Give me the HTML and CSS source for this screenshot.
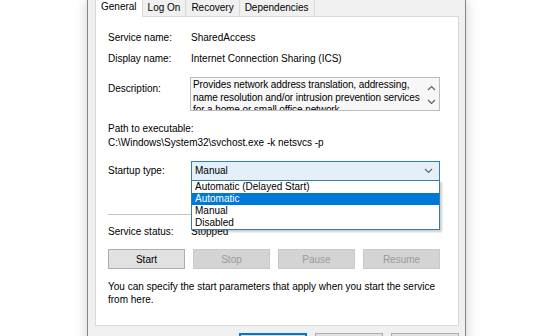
FILE: index.html
```html
<!DOCTYPE html>
<html lang="en">
<head>
    <meta charset="UTF-8">
    <meta name="viewport" content="width=device-width, initial-scale=1.0">
    <title>SharedAccess Properties</title>
    <link rel="stylesheet" href="styles.css">
</head>
<body>
    <div class="window">
        <div class="tabs">
            <div class="tab active">General</div>
            <div class="tab">Log On</div>
            <div class="tab">Recovery</div>
            <div class="tab">Dependencies</div>
        </div>

        <div class="panel">
            <div class="field">
                <span class="label">Service name:</span>
                <span>SharedAccess</span>
            </div>
            <div class="field display-row">
                <span class="label">Display name:</span>
                <span>Internet Connection Sharing (ICS)</span>
            </div>
            <div class="field desc-row">
                <span class="label desc-label">Description:</span>
                <div class="desc-box">
                    <div class="desc-text">Provides network address translation, addressing, name resolution and/or intrusion prevention services for a home or small office network.</div>
                    <div class="scroll">
                        <svg width="9" height="6" viewBox="0 0 9 6"><path d="M1 5 L4.5 1.5 L8 5" fill="none" stroke="#606060" stroke-width="1.2"/></svg>
                        <svg width="9" height="6" viewBox="0 0 9 6"><path d="M1 1 L4.5 4.5 L8 1" fill="none" stroke="#606060" stroke-width="1.2"/></svg>
                    </div>
                </div>
            </div>

            <div class="path">
                <div>Path to executable:</div>
                <div>C:\Windows\System32\svchost.exe -k netsvcs -p</div>
            </div>

            <div class="field startup-row">
                <span class="label">Startup type:</span>
                <div class="combo">
                    <span>Manual</span>
                    <svg class="chevron" width="9" height="6" viewBox="0 0 9 6"><path d="M1 1 L4.5 4.5 L8 1" fill="none" stroke="#606060" stroke-width="1.1"/></svg>
                    <div class="options">
                        <div class="option">Automatic (Delayed Start)</div>
                        <div class="option selected">Automatic</div>
                        <div class="option">Manual</div>
                        <div class="option">Disabled</div>
                    </div>
                </div>
            </div>

            <div class="separator"></div>

            <div class="field status-row">
                <span class="label">Service status:</span>
                <span>Stopped</span>
            </div>

            <div class="service-buttons">
                <button class="btn">Start</button>
                <button class="btn" disabled>Stop</button>
                <button class="btn" disabled>Pause</button>
                <button class="btn" disabled>Resume</button>
            </div>

            <p class="note">You can specify the start parameters that apply when you start the service from here.</p>
        </div>

        <div class="dialog-buttons">
            <button class="btn wide default">OK</button>
            <button class="btn wide">Cancel</button>
            <button class="btn wide">Apply</button>
        </div>
    </div>
</body>
</html>
```

FILE: styles.css
```css
/* Basic reset */
* {
    margin: 0;
    padding: 0;
    box-sizing: border-box;
}

body {
    font-family: "Liberation Sans", Arial, sans-serif;
    font-size: 10px;
    color: #000;
    background: #fff;
    height: 336px;
    overflow: hidden;
    padding-left: 87px;
}

/* Dialog window */
.window {
    width: 379px;
    height: 380px;
    background: #f0f0f0;
    border-left: 1px solid #858585;
    border-right: 1px solid #858585;
    box-shadow: 0 0 12px rgba(0, 0, 0, 0.2);
    padding: 0 6px 0 7px;
}

/* Tabs */
.tabs {
    display: flex;
    height: 16px;
    position: relative;
    z-index: 1;
}

.tab {
    height: 16px;
    line-height: 16px;
    padding: 0 5px;
    border-left: 1px solid #d9d9d9;
    border-right: 1px solid #d9d9d9;
    margin-left: -1px;
    background: #f0f0f0;
    white-space: nowrap;
}

.tab:first-child {
    margin-left: 0;
}

.tab.active {
    height: 17px;
    line-height: 14px;
    background: #fff;
}

/* Tab page */
.panel {
    background: #fff;
    border: 1px solid #d9d9d9;
    height: 310px;
    padding: 14px 18px 0 12px;
}

.field {
    display: grid;
    grid-template-columns: 83px 1fr;
    line-height: 14px;
}

.display-row {
    margin-top: 7px;
}

.desc-row {
    margin-top: 11px;
}

.desc-label {
    padding-top: 5px;
}

.desc-box {
    display: flex;
    height: 34px;
    margin-left: -1px;
    border: 1px solid #bcbcbc;
    background: #f7f7f7;
    overflow: hidden;
}

.desc-text {
    flex: 1;
    padding: 1px 1px 1px 2px;
    line-height: 12.5px;
    letter-spacing: -0.1px;
}

.scroll {
    width: 15px;
    display: flex;
    flex-direction: column;
    justify-content: space-around;
    align-items: center;
    padding: 3px 0 1px;
}

.path {
    margin-top: 11px;
    line-height: 14px;
}

.startup-row {
    margin-top: 11px;
    align-items: center;
}

/* Startup type combo box with open list */
.combo {
    position: relative;
    height: 20px;
    border: 1px solid #2f7fc0;
    background: #e3eff9;
    padding: 0 6px 0 3px;
    display: flex;
    justify-content: space-between;
    align-items: center;
}

.options {
    position: absolute;
    top: 18px;
    left: -1px;
    right: -1px;
    border: 1px solid #3c7aa3;
    background: #fff;
    box-shadow: 2px 2px 2px rgba(0, 0, 0, 0.2);
    z-index: 2;
}

.option {
    height: 12px;
    line-height: 12px;
    padding-left: 3px;
}

.option.selected {
    background: #0078d7;
    color: #fff;
}

.separator {
    margin-top: 33px;
    height: 1px;
    background: #c4c4c4;
}

.status-row {
    margin-top: 10px;
}

/* Buttons */
.service-buttons {
    margin-top: 10px;
    display: grid;
    grid-template-columns: repeat(4, 1fr);
    gap: 8px;
}

.btn {
    height: 20px;
    border: 1px solid #adadad;
    background: #e1e1e1;
    font: inherit;
    color: #000;
}

.btn:disabled {
    background: #d4d4d4;
    border-color: #c9c9c9;
    color: #9a9a9a;
}

.note {
    margin-top: 11px;
    line-height: 13px;
}

.dialog-buttons {
    margin-top: 7px;
    display: flex;
    justify-content: flex-end;
    gap: 8px;
}

.btn.wide {
    width: 68px;
    height: 21px;
}

.btn.default {
    border: 2px solid #0078d7;
}
```
